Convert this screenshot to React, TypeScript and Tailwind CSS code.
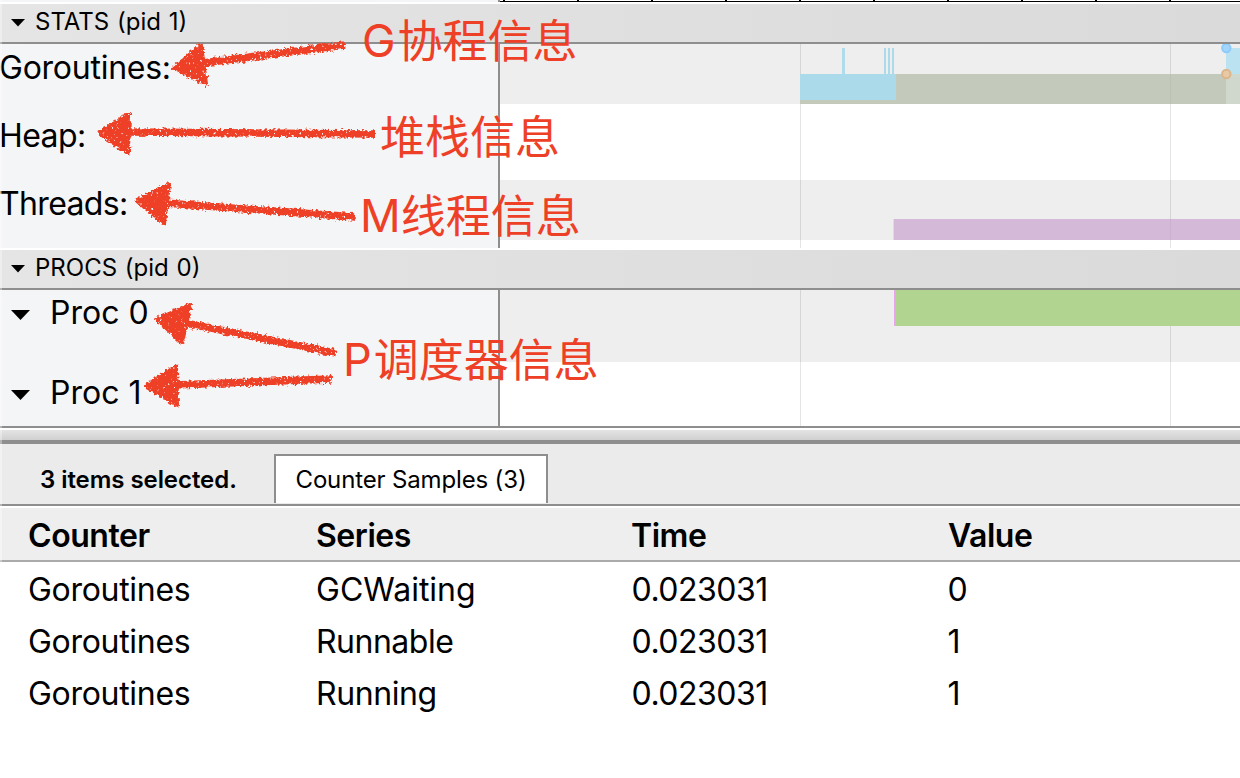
import type { ReactNode } from "react";

const samples = [
  { counter: "Goroutines", series: "GCWaiting", time: "0.023031", value: "0", fit: "tracking-normal" },
  { counter: "Goroutines", series: "Runnable", time: "0.023031", value: "1", fit: "tracking-[-0.5px]" },
  { counter: "Goroutines", series: "Running", time: "0.023031", value: "1", fit: "tracking-[-0.4px]" },
];

const ticks = [3, 77, 151, 225, 299, 373, 447, 521, 595, 669];

function Ruler() {
  return (
    <div className="flex h-1 bg-white">
      <div className="h-0.5 w-[498px] bg-[#f4f5f7]" />
      <div className="h-0.5 w-0.5 bg-[#8e8e8e]" />
      <svg width="740" height="2" shapeRendering="crispEdges">
        <rect width="740" height="1" fill="#fff" />
        <rect y="1" width="740" height="1" fill="#000" />
        {ticks.map((x) => (
          <rect key={x} x={x} width="2" height="2" fill="#000" />
        ))}
      </svg>
    </div>
  );
}

function ProcessHeader({ title }: { title: ReactNode }) {
  return (
    <div className="flex h-10 items-start border-b-2 border-[#8e8e8e] bg-linear-to-r from-[#e5e5e5] to-[#dadada] pl-[11px]">
      <svg width="14" height="8" className="mt-[15px]">
        <path d="M0 0H14L7 7.5Z" fill="#000" />
      </svg>
      <span className="ml-[10px] mt-[3px] text-[24px] leading-[30px] [word-spacing:1px] whitespace-nowrap">{title}</span>
    </div>
  );
}

function ProcLabel({ name }: { name: string }) {
  return (
    <div className="flex h-20 items-start pl-[11px]">
      <svg width="19" height="10" className="mt-5">
        <path d="M0 0H19L9.5 10Z" fill="#000" />
      </svg>
      <span className="ml-[20px] mt-[3px] text-[32px] leading-10 whitespace-nowrap">{name}</span>
    </div>
  );
}

function StatsTracks() {
  return (
    <svg width="740" height="204" shapeRendering="crispEdges">
      <rect width="740" height="204" fill="#fff" />
      <rect width="740" height="60" fill="#eee" />
      <rect y="136" width="740" height="60" fill="#eee" />
      <rect x="300" y="30" width="426" height="30" fill="#c3c9bb" />
      <rect x="300" y="30" width="96" height="26" fill="#abdaeb" />
      <rect x="342" y="4" width="3" height="26" fill="#afdbea" />
      <rect x="384" y="4" width="2" height="26" fill="#abdaeb" />
      <rect x="388" y="4" width="2" height="26" fill="#abdaeb" />
      <rect x="392" y="4" width="2" height="26" fill="#abdaeb" />
      <rect x="726" y="4" width="14" height="26" fill="#bbe2f1" />
      <rect x="726" y="30" width="14" height="30" fill="#d0d8ce" />
      <rect x="394" y="175" width="346" height="21" fill="#d4b9d9" />
      <rect x="393" y="175" width="1" height="21" fill="#e1d9e2" />
      <rect x="300" width="1" height="30" fill="#000" opacity="0.1" />
      <rect x="300" y="60" width="1" height="144" fill="#000" opacity="0.1" />
      <rect x="670" width="1" height="30" fill="#000" opacity="0.1" />
      <rect x="670" y="30" width="1" height="30" fill="#000" opacity="0.04" />
      <rect x="670" y="60" width="1" height="115" fill="#000" opacity="0.1" />
      <rect x="670" y="175" width="1" height="21" fill="#000" opacity="0.04" />
      <rect x="670" y="196" width="1" height="8" fill="#000" opacity="0.1" />
      <g shapeRendering="auto" strokeWidth="2">
        <circle cx="726.3" cy="4" r="4.2" fill="#a3d4fa" stroke="#8dccfa" />
        <circle cx="726.3" cy="30" r="4.2" fill="#e8c9a6" stroke="#dcb58a" />
      </g>
    </svg>
  );
}

function ProcTracks() {
  return (
    <svg width="740" height="136" shapeRendering="crispEdges">
      <rect width="740" height="136" fill="#fff" />
      <rect width="740" height="72" fill="#eee" />
      <rect x="300" width="1" height="136" fill="#000" opacity="0.1" />
      <rect x="670" y="36" width="1" height="100" fill="#000" opacity="0.1" />
      <rect x="394" width="2" height="36" fill="#e9a6ec" />
      <rect x="396" width="344" height="36" fill="#b1d490" />
    </svg>
  );
}

const arrows = [
  { head: "M174 68 L201 45 L206 84Z", shaft: "M203 63 L345 45" },
  { head: "M99 133 L129 114 L128 153Z", shaft: "M127 132 L375 134" },
  { head: "M137 201 L169 184 L164 223Z", shaft: "M165 203 L355 217" },
  { head: "M157 319 L190 305 L182 343Z", shaft: "M185 323 L336 353" },
  { head: "M146 386 L176 366 L177 405Z", shaft: "M174 385 L332 379" },
];

function Arrows() {
  return (
    <svg className="pointer-events-none absolute left-0 top-0" width="400" height="430">
      <defs>
        <filter id="crayon" filterUnits="userSpaceOnUse" x="0" y="0" width="400" height="430" colorInterpolationFilters="sRGB">
          <feTurbulence type="fractalNoise" baseFrequency="0.37" numOctaves="2" seed="7" result="noise" />
          <feDisplacementMap in="SourceGraphic" in2="noise" scale="6" xChannelSelector="R" yChannelSelector="G" result="rough" />
          <feColorMatrix in="noise" type="matrix" values="0 0 0 0 0  0 0 0 0 0  0 0 0 0 0  0 0 8 0 -1.6" result="grain" />
          <feComposite in="rough" in2="grain" operator="in" />
        </filter>
      </defs>
      <g filter="url(#crayon)" fill="#ee4026" stroke="#ee4026">
        {arrows.map((a) => (
          <g key={a.head}>
            <path d={a.head} strokeWidth="4" strokeLinejoin="round" />
            <path d={a.shaft} strokeWidth="7.5" />
          </g>
        ))}
      </g>
    </svg>
  );
}

function Note({ className, letter, text }: { className: string; letter?: string; text: string }) {
  return (
    <div className={`absolute flex h-12 text-[45px] leading-[48px] whitespace-nowrap text-[#ee4026] ${className}`}>
      {letter && <span className="mt-0.5 font-['Inter',sans-serif]">{letter}</span>}
      <span className="font-['Noto_Sans_CJK_SC',sans-serif]">{text}</span>
    </div>
  );
}

export default function App() {
  return (
    <div className="relative h-[778px] w-[1240px] overflow-hidden bg-white font-['Inter','Noto_Sans_CJK_SC',sans-serif] text-black">
      <Ruler />
      <ProcessHeader title="STATS (pid 1)" />
      <div className="flex h-[204px]">
        <div className="flex w-[500px] flex-col border-r-2 border-[#8e8e8e] bg-[#f4f5f7] pt-1 text-[32px] leading-10">
          <span className="-ml-px h-[68px] tracking-[-0.25px]">Goroutines:</span>
          <span className="-ml-px h-[68px] tracking-[-0.6px]">Heap:</span>
          <span className="-ml-px tracking-[-0.65px]">Threads:</span>
        </div>
        <StatsTracks />
      </div>
      <div className="h-0.5" />
      <ProcessHeader title="PROCS (pid 0)" />
      <div className="flex h-[138px] overflow-hidden border-b-2 border-[#8e8e8e]">
        <div className="w-[500px] border-r-2 border-[#8e8e8e] bg-[#f4f5f7]">
          <ProcLabel name="Proc 0" />
          <ProcLabel name="Proc 1" />
        </div>
        <ProcTracks />
      </div>
      <div className="mt-0.5 h-[14px] border-b-4 border-[#8e8e8e] bg-linear-to-b from-[#e4e4e4] to-[#d0d0d0]" />
      <div className="flex h-[62px] border-b-2 border-[#8e8e8e] bg-[#ebebeb] pt-[10px] text-[24px] leading-[30px]">
        <div className="w-[274px] pl-10 pt-[11px] font-semibold tracking-[-0.06px] whitespace-nowrap">3 items selected.</div>
        <div className="h-[49px] w-[274px] border-2 border-b-0 border-[#8e8e8e] bg-white pl-[19.5px] pt-[9px] tracking-[-0.15px] whitespace-nowrap">Counter Samples (3)</div>
      </div>
      <table className="mt-0.5 w-full table-fixed border-separate border-spacing-0 text-left text-[32px] leading-10">
        <colgroup>
          <col className="w-[302px]" />
          <col className="w-[316px]" />
          <col className="w-[316px]" />
          <col />
        </colgroup>
        <thead className="bg-[#eee] tracking-[-0.45px]">
          <tr className="h-[54px]">
            <th className="border-b-2 border-[#aaa] pb-0 pl-7 pt-[3px] font-semibold">Counter</th>
            <th className="border-b-2 border-[#aaa] pb-0 pl-3.5 pt-[3px] font-semibold">Series</th>
            <th className="border-b-2 border-[#aaa] pb-0 pl-[13px] pt-[3px] font-semibold">Time</th>
            <th className="border-b-2 border-[#aaa] pb-0 pl-3.5 pt-[3px] font-semibold">Value</th>
          </tr>
        </thead>
        <tbody>
          {samples.map((s) => (
            <tr key={s.series} className="h-[52px]">
              <td className="pb-0 pl-7 pt-[3px] tracking-[-0.3px]">{s.counter}</td>
              <td className={`pb-0 pl-3.5 pt-[3px] ${s.fit}`}>{s.series}</td>
              <td className="pb-0 pl-[13.5px] pt-[3px] tracking-[-0.5px]">{s.time}</td>
              <td className="pb-0 pl-[13.5px] pt-[3px]">{s.value}</td>
            </tr>
          ))}
        </tbody>
      </table>
      <div className="pointer-events-none absolute left-0 top-0 h-[562px] w-0.5 bg-white/35" />
      <Arrows />
      <Note className="left-[362px] top-[15px] gap-[2px]" letter="G" text="协程信息" />
      <Note className="left-[380px] top-[111px]" text="堆栈信息" />
      <Note className="left-[360px] top-[190px]" letter="M" text="线程信息" />
      <Note className="left-[343px] top-[334px] gap-[2px]" letter="P" text="调度器信息" />
    </div>
  );
}
